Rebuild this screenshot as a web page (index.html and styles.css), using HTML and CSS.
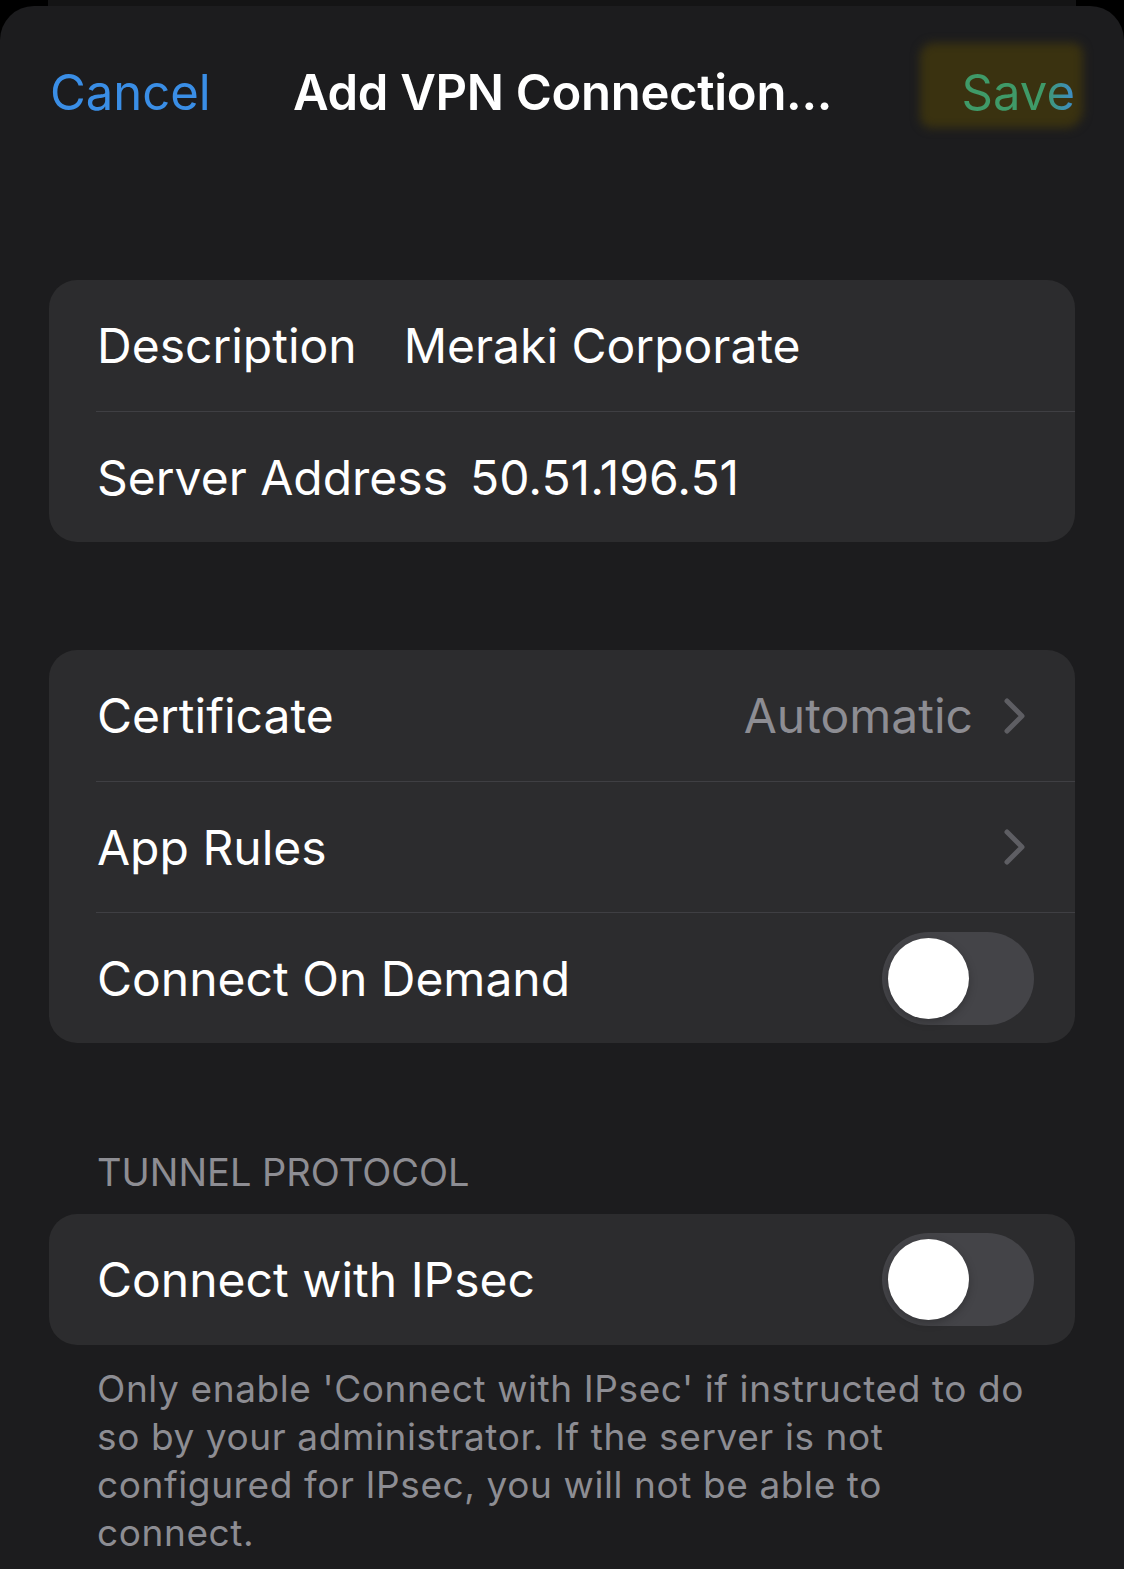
FILE: index.html
```html
<!DOCTYPE html>
<html lang="en">
<head>
  <meta charset="UTF-8">
  <title>Add VPN Connection</title>
  <link rel="stylesheet" href="styles.css">
</head>
<body>
  <div class="backsheet"></div>
  <div class="sheet">
    <div class="nav">
      <span class="nav-cancel">Cancel</span>
      <span class="nav-title">Add VPN Connection...</span>
      <span class="nav-save"><span class="marker"></span><span class="save-text">Save</span></span>
    </div>

    <div class="group group-first">
      <div class="row">
        <span class="label">Description</span>
        <span class="value value-wide">Meraki Corporate</span>
      </div>
      <div class="row">
        <span class="label">Server Address</span>
        <span class="value">50.51.196.51</span>
      </div>
    </div>

    <div class="group">
      <div class="row row-link">
        <span class="label">Certificate</span>
        <span class="detail">Automatic</span>
        <svg class="chevron" viewBox="0 0 24 36" width="24" height="36"><path d="M4 3 L19 18 L4 33" /></svg>
      </div>
      <div class="row row-link">
        <span class="label">App Rules</span>
        <svg class="chevron" viewBox="0 0 24 36" width="24" height="36"><path d="M4 3 L19 18 L4 33" /></svg>
      </div>
      <div class="row">
        <span class="label">Connect On Demand</span>
        <div class="toggle"><div class="knob"></div></div>
      </div>
    </div>

    <div class="section-header">TUNNEL PROTOCOL</div>
    <div class="group group-tight">
      <div class="row">
        <span class="label">Connect with IPsec</span>
        <div class="toggle"><div class="knob"></div></div>
      </div>
    </div>
    <p class="footer">Only enable 'Connect with IPsec' if instructed to do so by your administrator. If the server is not configured for IPsec, you will not be able to connect.</p>
  </div>
</body>
</html>
```

FILE: styles.css
```css
body {
  margin: 0;
  background: #000;
  font-family: Inter, 'Noto Sans', sans-serif;
  color: #fff;
}

.backsheet {
  height: 6px;
  margin: 0 48px;
  background: #141415;
}

.sheet {
  background: #1c1c1e;
  border-radius: 34px 34px 0 0;
  min-height: 1563px;
  overflow: hidden;
}

/* nav bar */
.nav {
  display: grid;
  grid-template-columns: 1fr auto 1fr;
  align-items: center;
  height: 172px;
  padding: 0 49px 0 50px;
  font-size: 49px;
}

.nav-cancel {
  color: #3a8ee6;
}

.nav-title {
  font-weight: 600;
  font-size: 49px;
  letter-spacing: -0.3px;
}

.nav-save {
  justify-self: end;
  position: relative;
}

.marker {
  position: absolute;
  left: -42px;
  right: -8px;
  top: -20px;
  bottom: -6px;
  background: #3a3210;
  border-radius: 14px 10px 18px 12px;
  filter: blur(5px);
}

.save-text {
  position: relative;
  background: linear-gradient(90deg, #3f9a68 72%, #3d8ccc 100%);
  -webkit-background-clip: text;
  background-clip: text;
  color: transparent;
}

/* grouped lists */
.group {
  margin: 108px 49px 0;
  background: #2c2c2e;
  border-radius: 28px;
  overflow: hidden;
}

.group-first {
  margin-top: 102px;
}

.group-tight {
  margin-top: 19px;
}

.row {
  display: flex;
  align-items: center;
  height: 131px;
  box-sizing: border-box;
  padding: 0 41px 0 48px;
  font-size: 48px;
}

.row + .row {
  border-top: 1px solid #3f3f43;
  margin-left: 47px;
  padding-left: 1px;
}

.value {
  margin-left: 22px;
}

.value-wide {
  margin-left: 47px;
}

.detail {
  margin-left: auto;
  color: #8d8d93;
}

.chevron {
  margin-left: 30px;
  margin-right: 7px;
  fill: none;
  stroke: #5e5e63;
  stroke-width: 5;
  stroke-linecap: round;
  stroke-linejoin: round;
}

.row-link .label + .chevron {
  margin-left: auto;
}

.toggle {
  margin-left: auto;
  width: 152px;
  height: 93px;
  border-radius: 47px;
  background: #444448;
  padding: 6px;
  box-sizing: border-box;
}

.knob {
  width: 81px;
  height: 81px;
  border-radius: 50%;
  background: #fff;
  box-shadow: 0 3px 8px rgba(0,0,0,0.25);
}

.section-header {
  margin: 106px 49px 0 97px;
  font-size: 38px;
  line-height: 46px;
  color: #8d8d93;
}

.footer {
  margin: 20px 77px 0 97px;
  font-size: 37px;
  line-height: 48px;
  letter-spacing: 0.6px;
  color: #8d8d93;
}
```
